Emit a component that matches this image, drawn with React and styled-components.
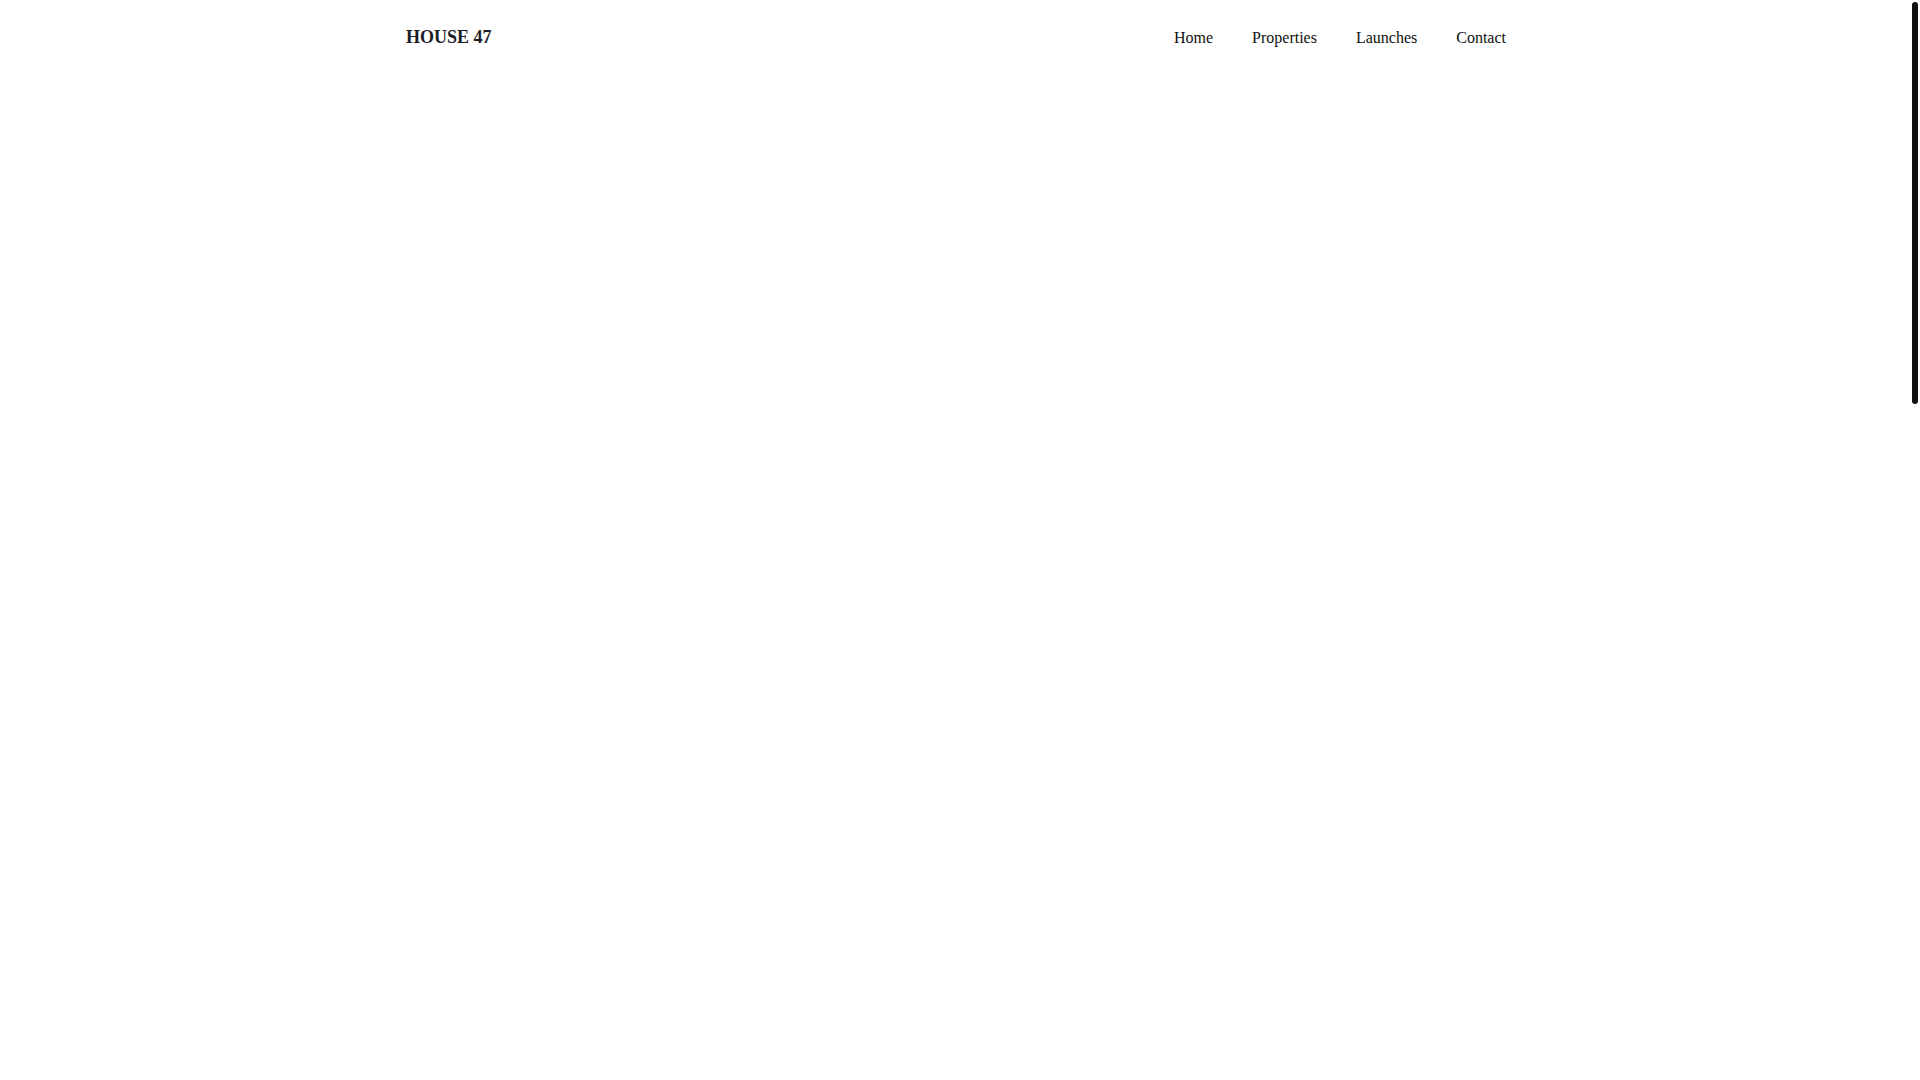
import styled, { createGlobalStyle } from "styled-components";

const GlobalStyle = createGlobalStyle`
  html, body {
    margin: 0;
    padding: 0;
    background: #fff;
  }
  body {
    font-family: "Liberation Serif", "Times New Roman", serif;
    color: #111;
  }
  ::-webkit-scrollbar {
    width: 0;
  }
`;

const links = ["Home", "Properties", "Launches", "Contact"];

export default function App() {
  return (
    <>
      <GlobalStyle />
      <Header>
        <Inner>
          <Logo href="#">HOUSE 47</Logo>
          <Nav>
            {links.map((l) => (
              <NavLink key={l} href="#">
                {l}
              </NavLink>
            ))}
          </Nav>
        </Inner>
      </Header>
      <Main />
      <ScrollThumb />
    </>
  );
}

const Header = styled.header`
  width: 100%;
  box-sizing: border-box;
  padding-right: 8px;
  background: #fff;
`;

const Inner = styled.div`
  max-width: 1100px;
  margin: 0 auto;
  padding: 27px 0 29px;
  display: flex;
  align-items: center;
  justify-content: space-between;
`;

const Logo = styled.a`
  font-size: 18px;
  font-weight: 700;
  color: #1b1e27;
  text-decoration: none;
`;

const Nav = styled.nav`
  display: flex;
  align-items: center;
  gap: 39px;
`;

const NavLink = styled.a`
  font-size: 16px;
  color: #111;
  text-decoration: none;
`;

const Main = styled.main`
  height: 2770px;
`;

const ScrollThumb = styled.div`
  position: fixed;
  top: 2px;
  right: 2px;
  width: 6px;
  height: 402px;
  border-radius: 3px;
  background: #111;
`;
